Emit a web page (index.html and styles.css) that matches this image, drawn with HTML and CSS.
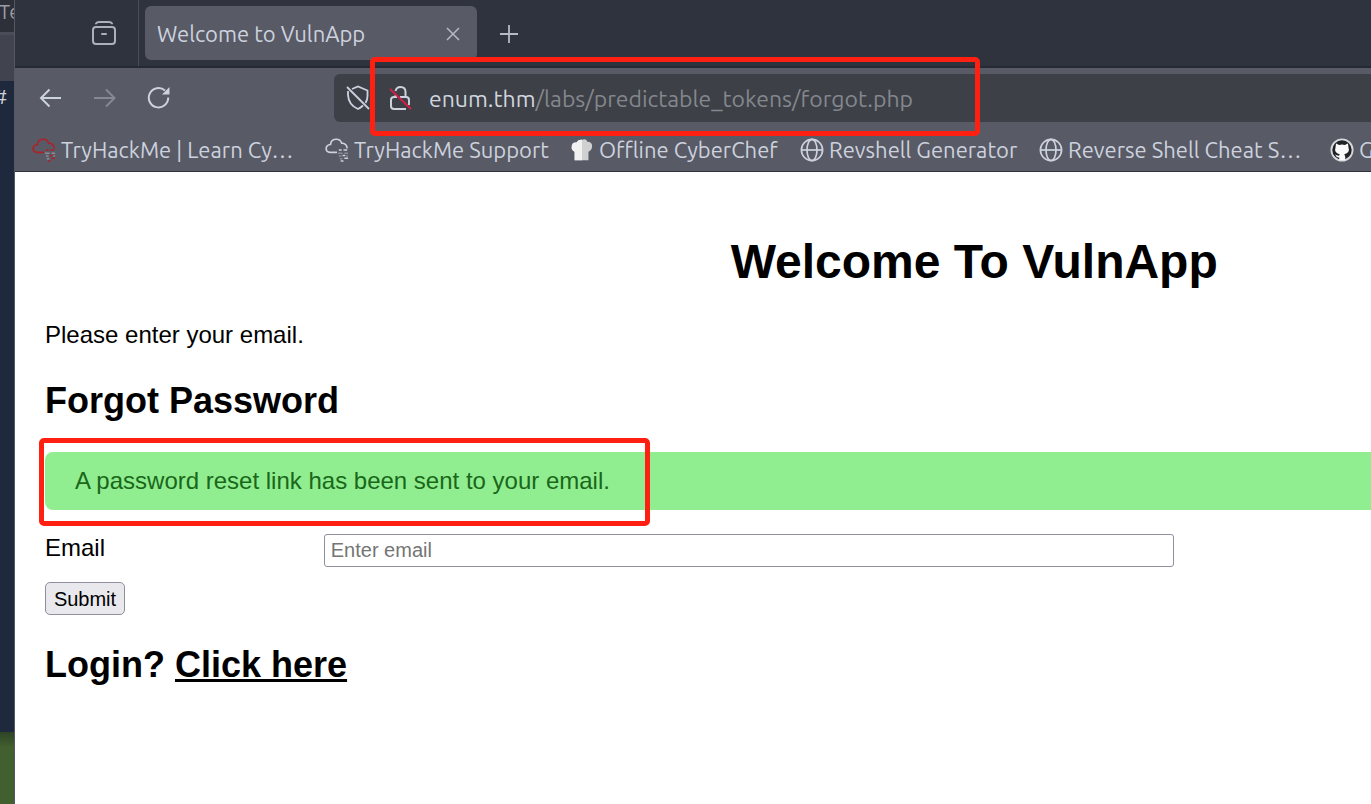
FILE: index.html
```
<!DOCTYPE html>
<html lang="en">
<head>
  <meta charset="UTF-8" />
  <meta name="viewport" content="width=device-width, initial-scale=1.0" />
  <title>Welcome to VulnApp</title>
  <link rel="stylesheet" href="styles.css">
</head>
<body>
  <svg class="sprite" aria-hidden="true">
    <symbol id="globe" viewBox="0 0 24 24">
      <g fill="none" stroke="currentColor" stroke-width="1.7">
        <circle cx="12" cy="12" r="10.6"/>
        <ellipse cx="12" cy="12" rx="5" ry="10.6"/>
        <path d="M1.500 12h21"/>
      </g>
    </symbol>
    <symbol id="cloud" viewBox="0 0 26 26">
      <path d="M13 15.500H5.500C-.5 15 0 7.500 6 7C6.500 0 16 -.5 18 5.500C21.500 5.500 24 8 24 11.500" fill="none" stroke="currentColor" stroke-width="1.800"/>
      <path d="M15 13h3M20 13h4M19 19h3M21 22h4M17 25h3" fill="none" stroke="currentColor" stroke-width="1.600"/>
      <path class="bits" d="M14 16.500h5M21 16.500h4M15 19.500h3M23 19.500h2M16 22.500h3" fill="none" stroke-width="1.600"/>
    </symbol>
  </svg>

  <div class="desktop">
    <!-- terminal window peeking out behind the browser -->
    <div class="behind">
      <div class="behind-title">Te</div>
      <div class="behind-menu"></div>
      <div class="behind-term">#</div>
      <div class="behind-wall"></div>
    </div>

    <div class="browser">
      <div class="tabs">
        <button class="recent" aria-label="Recent browsing">
          <svg width="26" height="26" viewBox="0 0 26 26" fill="none" stroke="currentColor" stroke-width="2" stroke-linecap="round">
            <path d="M5 3.500Q6 2 8 2H18Q20 2 21 3.500"/>
            <rect x="2" y="7" width="22" height="17" rx="3"/>
            <path d="M11 14h4"/>
          </svg>
        </button>
        <div class="tab">
          <span>Welcome to VulnApp</span>
          <button aria-label="Close tab">
            <svg width="14" height="14" viewBox="0 0 14 14" stroke="currentColor" stroke-width="1.500"><path d="M1 1l12 12M13 1L1 13"/></svg>
          </button>
        </div>
        <button class="new-tab" aria-label="New tab">
          <svg width="20" height="20" viewBox="0 0 20 20" stroke="currentColor" stroke-width="1.800"><path d="M10 1v18M1 10h18"/></svg>
        </button>
      </div>

      <div class="toolbar">
        <div class="nav">
          <button aria-label="Back">
            <svg width="24" height="24" viewBox="0 0 24 24" fill="none" stroke="currentColor" stroke-width="2"><path d="M22 12H2.500M10.500 3.500L2 12L10.500 20.500"/></svg>
          </button>
          <button aria-label="Forward" disabled>
            <svg width="24" height="24" viewBox="0 0 24 24" fill="none" stroke="currentColor" stroke-width="2"><path d="M1 12h20M13 3.500L21.500 12L13 20.500"/></svg>
          </button>
          <button aria-label="Reload">
            <svg width="24" height="24" viewBox="0 0 24 24" fill="none" stroke="currentColor" stroke-width="2">
              <path d="M18 4.500A9.700 9.700 0 1 0 21.200 11.500"/>
              <path d="M22.500 1V8.500H15Z" fill="currentColor" stroke="none"/>
            </svg>
          </button>
        </div>
        <div class="urlbar">
          <svg width="26" height="26" viewBox="0 0 26 26" fill="none" stroke="currentColor" stroke-width="1.800">
            <path d="M7 4L13 1.500L22.500 5.500V11Q22.500 15 20.500 18M3 6V10Q3.500 20 13 24Q16 22.500 18 20.500"/>
            <path d="M2 2L24 24"/>
          </svg>
          <svg width="26" height="26" viewBox="0 0 26 26" fill="none" stroke="currentColor" stroke-width="2">
            <path d="M8.500 6Q9.500 2 13.500 2Q18.500 2 18.500 7V12M8.500 10V12"/>
            <path d="M13 12H19Q22 12 22 15V20M19 24H7Q4 24 4 21V15Q4 12 7 12H10"/>
            <path class="slash" d="M3 4L24 24"/>
          </svg>
          <div class="url"><b>enum.thm</b>/labs/predictable_tokens/forgot.php</div>
          <div class="mark mark-url"></div>
        </div>
      </div>

      <div class="bookmarks">
        <a href="#" class="bm-learn"><svg><use href="#cloud"/></svg><span>TryHackMe | Learn Cy…</span></a>
        <a href="#" class="bm-support"><svg><use href="#cloud"/></svg><span>TryHackMe Support</span></a>
        <a href="#" class="bm-chef">
          <svg viewBox="0 0 26 26">
            <path d="M5 24V15Q1 13 2 8Q3 4 7 5Q9 1 13 2Q17 0 19 4Q24 4 24 9Q24 13 20 15V24Z" fill="#d0d0d0"/>
            <path d="M5 24V15Q1 13 2 8Q3 4 7 5Q9 1 13 2V24Z" fill="#f1f1f1"/>
          </svg>
          <span>Offline CyberChef</span>
        </a>
        <a href="#" class="bm-revshell"><svg><use href="#globe"/></svg><span>Revshell Generator</span></a>
        <a href="#" class="bm-cheat"><svg><use href="#globe"/></svg><span>Reverse Shell Cheat S…</span></a>
        <a href="#">
          <svg viewBox="0 0 26 26">
            <circle cx="13" cy="13" r="11.500" fill="#202226" stroke="#d5d7da" stroke-width="2"/>
            <path d="M6.500 6L10 7.500Q13 6.800 16 7.500L19.500 6L20 10Q22 16 15.500 17.500L16.500 20V24H10V21Q7 21.500 5.500 18Q8 19.500 10 19L10.500 17.500Q4 16 6 10Z" fill="#fafafa"/>
          </svg>
          <span>G</span>
        </a>
      </div>

      <main>
        <h1>Welcome To VulnApp</h1>
        <p>Please enter your email.</p>
        <h2>Forgot Password</h2>
        <div class="alert">
          A password reset link has been sent to your email.
          <div class="mark mark-alert"></div>
        </div>
        <form>
          <div class="row">
            <label for="email">Email</label>
            <input type="email" id="email" placeholder="Enter email">
          </div>
          <button type="submit">Submit</button>
        </form>
        <h2>Login? <a href="#">Click here</a></h2>
      </main>
    </div>
  </div>
</body>
</html>
```
FILE: styles.css
```
* { box-sizing: border-box; margin: 0; padding: 0; }

body {
  font-family: "Liberation Sans", Arial, sans-serif;
  font-size: 24px;
  line-height: 28px;
  color: #000;
  overflow: hidden;
}

button {
  font: inherit;
  color: inherit;
  background: none;
  border: none;
}

svg { display: block; flex: none; }

.sprite { position: absolute; width: 0; height: 0; }

.desktop {
  display: flex;
  min-height: 100vh;
}

/* terminal behind */
.behind {
  width: 14px;
  flex: none;
  display: flex;
  flex-direction: column;
  overflow: hidden;
  color: #9b9da5;
  font-family: Ubuntu, "Noto Sans", sans-serif;
  font-size: 20px;
}

.behind-title {
  height: 32px;
  background: #2d3039;
  line-height: 24px;
  text-indent: -1px;
}

.behind-menu {
  height: 49px;
  background: #41434e;
  border-top: 3px solid #4b4d58;
}

.behind-term {
  flex: 1;
  background: #1e293e;
  color: #d0d3d8;
  line-height: 32px;
  text-indent: -6px;
}

.behind-wall {
  height: 72px;
  background: linear-gradient(#2e4426, #42602f 16px);
}

/* the browser window runs off the right side of the screen */
.browser {
  width: 140vw;
  flex: none;
  display: flex;
  flex-direction: column;
  border-left: 1px solid #555761;
  background: #585a66;
  color: #ccd2de;
  font-family: Ubuntu, "Noto Sans", sans-serif;
}

.tabs {
  display: flex;
  align-items: center;
  height: 68px;
  background: #2f333e;
  border-bottom: 2px solid #262a34;
}

.recent {
  width: 124px;
  height: 66px;
  padding-left: 76px;
  color: #aab0bc;
  border-right: 1px solid #4a4d58;
}

.tab {
  display: flex;
  align-items: center;
  justify-content: space-between;
  width: 332px;
  height: 54px;
  margin-left: 6px;
  padding: 2px 17px 0 12px;
  border-radius: 6px;
  background: #585a66;
  font-size: 22px;
}

.new-tab {
  margin-left: 22px;
  padding-top: 2px;
  color: #b5bac5;
}

.tab button { color: #b5bac5; }

.toolbar {
  display: flex;
  align-items: center;
  height: 60px;
}

.nav {
  display: flex;
  gap: 30px;
  width: 319px;
  padding-left: 24px;
}

.nav button:disabled { color: #868995; }

.urlbar {
  position: relative;
  flex: 1;
  display: flex;
  align-items: center;
  gap: 16px;
  height: 48px;
  padding-left: 11px;
  border-radius: 6px;
  background: #3d4047;
}

.slash { stroke: #d01f49; }

.url {
  padding-top: 1px;
  font-size: 23px;
  color: #84878d;
}

.url b {
  font-weight: normal;
  color: #d1d5df;
}

.mark {
  position: absolute;
  border: 5px solid #ff2012;
  border-radius: 5px;
}

.mark-url {
  left: 36px;
  top: -17px;
  width: 610px;
  height: 79px;
}

.mark-alert {
  left: -6px;
  top: -14px;
  width: 611px;
  height: 88px;
}

.bookmarks {
  display: flex;
  align-items: center;
  gap: 18px;
  height: 44px;
  padding-left: 17px;
  border-bottom: 1px solid #30323b;
  font-size: 22px;
}

.bookmarks a {
  display: flex;
  align-items: center;
  gap: 5px;
  color: inherit;
  text-decoration: none;
  white-space: nowrap;
}

.bookmarks svg { width: 24px; height: 24px; }

.bits { stroke: #8b8d93; }

.bm-learn { width: 275px; }
.bm-support { width: 227px; }
.bm-chef { width: 212px; }
.bm-revshell { width: 221px; }
.bm-cheat { width: 273px; }

.bm-learn svg { color: #ad2229; }

/* page */
main {
  flex: 1;
  padding: 62px 30px 30px;
  background: #fff;
  color: #000;
  font-family: "Liberation Sans", Arial, sans-serif;
}

h1 {
  font-size: 48px;
  line-height: 56px;
  text-align: center;
}

p { margin: 31px 0; }

h2 {
  font-size: 36px;
  line-height: 42px;
}

h2 a { color: inherit; }

.alert {
  position: relative;
  margin: 30px 0 24px;
  padding: 15px 30px;
  border-radius: 8px;
  background: #90ee90;
  color: #1a671a;
}

.row {
  display: flex;
  margin-bottom: 15px;
}

.row label { width: 15%; }

.row input {
  width: 850px;
  height: 33px;
  padding: 0 6px;
  border: 1px solid #8f8f9d;
  border-radius: 3px;
  font: 20px "Liberation Sans", Arial, sans-serif;
}

.row input::placeholder { color: #757575; }

form button {
  width: 80px;
  height: 33px;
  margin-bottom: 29px;
  border: 1px solid #8f8f9d;
  border-radius: 5px;
  background: #e9e9ed;
  font-size: 20px;
}
```
